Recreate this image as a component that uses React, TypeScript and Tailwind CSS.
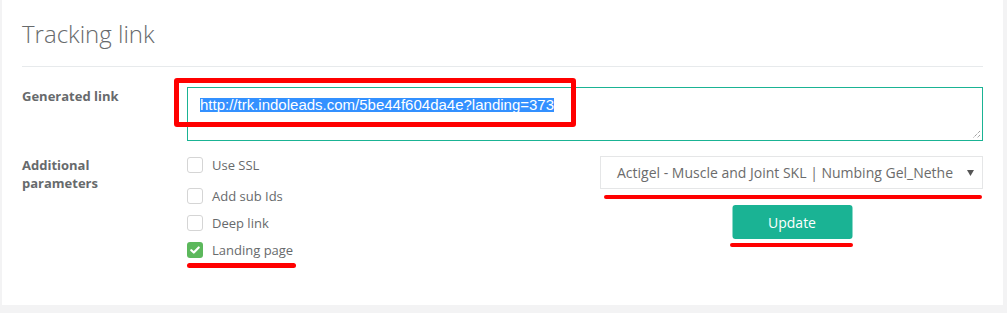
import React from "react";

function Check({ checked, label }: { checked?: boolean; label: string }) {
  return (
    <div className="flex items-center h-[16px]">
      {checked ? (
        <span className="w-[16px] h-[16px] rounded-[3px] bg-[#5cb85c] flex items-center justify-center">
          <svg width="10" height="8" viewBox="0 0 10 8">
            <path d="M1.3 4.2 L3.8 6.5 L8.7 1.5" stroke="#fff" strokeWidth="2.2" fill="none" strokeLinecap="round" strokeLinejoin="round" />
          </svg>
        </span>
      ) : (
        <span className="w-[16px] h-[16px] rounded-[3px] border border-[#d5d5d5] bg-white" />
      )}
      <span className="ml-[9px] text-[13px] leading-[16px] text-[#676a6c]">{label}</span>
    </div>
  );
}

export default function App() {
  return (
    <div
      className="w-[1007px] h-[313px] bg-[#f3f3f4] pl-[2px] pr-[4px] pb-[8px]"
      style={{ fontFamily: '"Open Sans", "Liberation Sans", sans-serif' }}
    >
      <div className="relative bg-white h-[305px] px-[20px]">
        <div className="h-[67px] pt-[16px] border-b border-[#e7eaec]">
          <h2 className="text-[24px] leading-[36px] font-light text-[#676a6c]">Tracking link</h2>
        </div>

        <div className="flex mt-[20px]">
          <div className="w-[165px] text-[13px] leading-[18px] font-bold text-[#676a6c]">Generated link</div>
          <div className="flex-1">
            <div className="relative h-[54px] border border-[#1ab394] pl-[12px] pt-[10px] leading-none">
              <span
                className="inline-block align-top h-[14px] leading-[14px] text-[15px] bg-[#3390ff] text-white"
                style={{ fontFamily: '"Liberation Sans", Arial, sans-serif' }}
              >
                http://trk.indoleads.com/5be44f604da4e?landing=373
              </span>
              <svg className="absolute right-[1px] bottom-[1px]" width="10" height="10" viewBox="0 0 10 10">
                <path d="M9 2 L2 9 M9 6 L6 9" stroke="#777" strokeWidth="1" strokeDasharray="1 1" />
              </svg>
            </div>
          </div>
        </div>

        <div className="flex mt-[15px]">
          <div className="w-[165px] text-[13px] leading-[18px] font-bold text-[#676a6c]">
            Additional
            <br />
            parameters
          </div>
          <div className="flex">
            <div className="w-[413px] pt-[1px] flex flex-col">
              <Check label="Use SSL" />
              <div className="mt-[15px]">
                <Check label="Add sub Ids" />
              </div>
              <div className="mt-[11px]">
                <Check label="Deep link" />
              </div>
              <div className="mt-[11px]">
                <Check checked label="Landing page" />
              </div>
              <div className="mt-[5px] w-[109px] h-[5px] rounded-full bg-[#ff0000]" />
            </div>
            <div className="w-[383px] flex flex-col items-center">
              <div className="w-full h-[33px] border border-[#e5e6e7] flex items-center pl-[16px] pr-[8px]">
                <span className="flex-1 whitespace-nowrap text-[14px] text-[#6b6b6b] mr-[14px]">
                  Actigel - Muscle and Joint SKL | Numbing Gel_Nethe
                </span>
                <svg width="7" height="6" viewBox="0 0 7 6">
                  <path d="M0 0 H7 L3.5 6 Z" fill="#555" />
                </svg>
              </div>
              <div className="self-stretch ml-[4px] mr-[1px] mt-[6px] h-[4px] rounded-full bg-[#ff0000]" />
              <button className="mt-[6px] w-[120px] h-[34px] rounded-[3px] bg-[#1ab394] text-white text-[14px] translate-x-[0.5px]">
                Update
              </button>
              <div className="mt-[4px] w-[123px] h-[4px] rounded-full bg-[#ff0000]" />
            </div>
          </div>
        </div>

        <div className="absolute left-[172px] top-[78px] w-[402px] h-[49px] border-[5px] border-[#ff0000] rounded-[3px] pointer-events-none" />
      </div>
    </div>
  );
}
